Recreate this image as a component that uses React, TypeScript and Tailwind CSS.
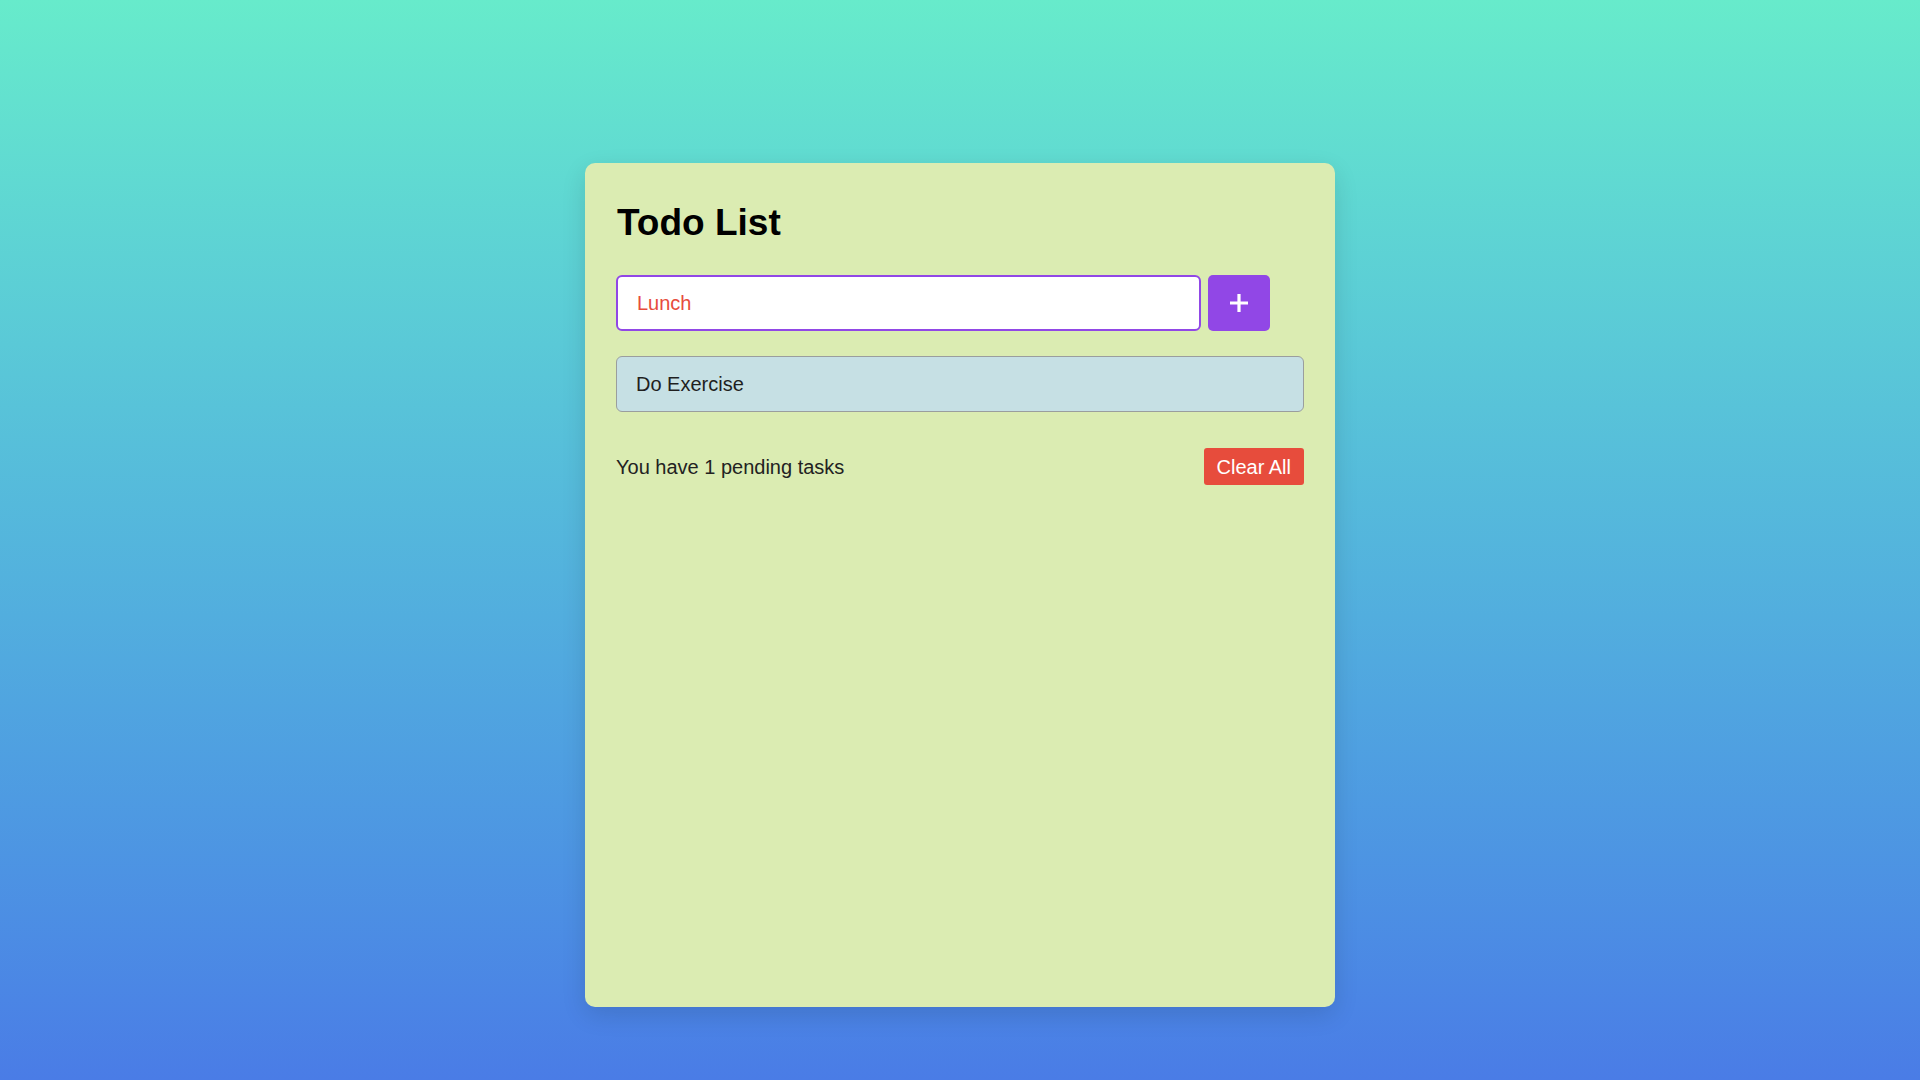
import React, { useState } from 'react';

function App() {
  const [input, setInput] = useState('Lunch');
  const [todos, setTodos] = useState<string[]>(['Do Exercise']);

  const addTodo = () => {
    if (!input.trim()) return;
    setTodos([...todos, input.trim()]);
    setInput('');
  };

  return (
    <div
      className="min-h-screen w-full bg-gradient-to-b from-[#67ebcb] to-[#4a7ce6] pt-[163px]"
      style={{ fontFamily: '"Liberation Sans", Arial, sans-serif' }}
    >
      <div className="mx-auto w-[750px] h-[844px] bg-[#dbecb2] rounded-[10px] shadow-[0_8px_24px_rgba(0,0,0,0.12)] px-[31px] pt-[40px]">
        <h1 className="text-[37px] leading-[40px] font-bold text-black pl-[1px]">Todo List</h1>

        <div className="flex items-center mt-[32px]">
          <input
            value={input}
            onChange={(e) => setInput(e.target.value)}
            className="w-[85%] h-[56px] bg-white border-2 border-[#9147e6] rounded-[6px] px-[19px] text-[20px] text-[#e74c3c] outline-none"
          />
          <button
            onClick={addTodo}
            className="ml-[7px] w-[62px] h-[56px] bg-[#9147e6] rounded-[5px] flex items-center justify-center"
          >
            <svg width="20" height="20" viewBox="0 0 20 20">
              <path d="M10 1v18M1 10h18" stroke="white" strokeWidth="3.2" />
            </svg>
          </button>
        </div>

        <ul className="mt-[25px] flex flex-col gap-[10px]">
          {todos.map((todo, i) => (
            <li
              key={i}
              className="h-[56px] flex items-center px-[19px] bg-[#c6e0e4] border border-[#9a9e9e] rounded-[6px] text-[20px] text-[#1f1f1f]"
            >
              {todo}
            </li>
          ))}
        </ul>

        <div className="flex items-center justify-between mt-[36px]">
          <span className="text-[20px] text-[#222]">You have {todos.length} pending tasks</span>
          <button
            onClick={() => setTodos([])}
            className="h-[37px] px-[13px] bg-[#e74c3c] text-white text-[20px] rounded-[3px]"
          >
            Clear All
          </button>
        </div>
      </div>
    </div>
  );
}

export default App;
